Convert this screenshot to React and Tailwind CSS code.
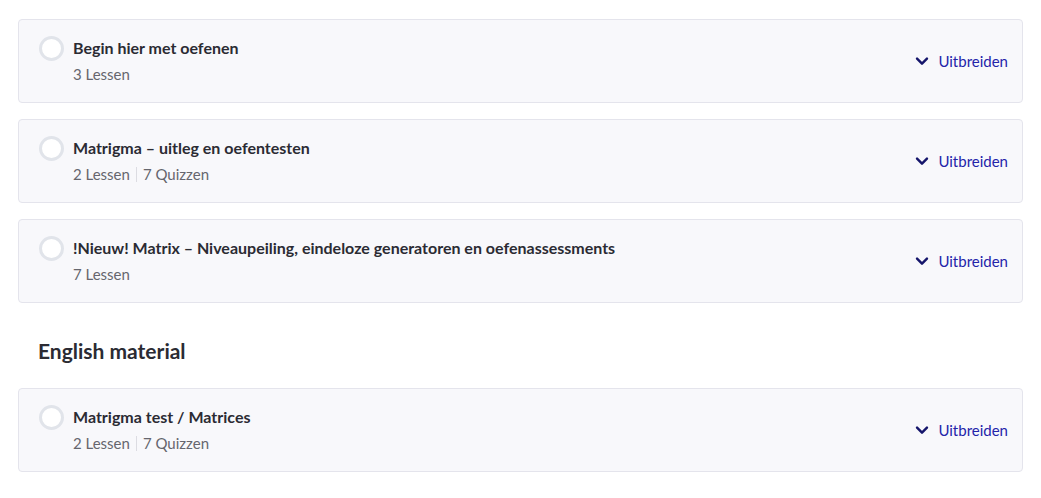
import React from 'react';

const sections = [
  { title: 'Begin hier met oefenen', meta: ['3 Lessen'] },
  { title: 'Matrigma – uitleg en oefentesten', meta: ['2 Lessen', '7 Quizzen'] },
  { title: '!Nieuw! Matrix – Niveaupeiling, eindeloze generatoren en oefenassessments', meta: ['7 Lessen'] },
];

const english = [{ title: 'Matrigma test / Matrices', meta: ['2 Lessen', '7 Quizzen'] }];

const Chevron = () => (
  <svg width="14" height="14" viewBox="0 0 24 24" fill="none" stroke="#15156b" strokeWidth="4.2" strokeLinecap="round" strokeLinejoin="round">
    <path d="M3.5 8l8.5 8.5 8.5-8.5" />
  </svg>
);

const CourseRow = ({ title, meta }) => (
  <div className="flex items-center justify-between rounded border border-[#e4e4ec] bg-[#f8f8fb] pl-5 pr-[14px] py-4">
    <div className="flex items-start gap-[9px]">
      <div className="flex h-6 items-center">
        <span className="block h-[25px] w-[25px] rounded-full border-[3px] border-[#e1e4ea] bg-white" />
      </div>
      <div>
        <p className="text-[16px] leading-6 font-bold text-[#2b2b33]">{title}</p>
        <div className="mt-0.5 flex items-center text-[15px] leading-6 text-[#66666e]">
          {meta.map((m, i) => (
            <React.Fragment key={m}>
              {i > 0 && <span className="mx-[6px] h-[15px] w-px bg-[#dcdce2]" />}
              <span>{m}</span>
            </React.Fragment>
          ))}
        </div>
      </div>
    </div>
    <button className="flex items-center gap-[9px] text-[15px] text-[#2424aa]">
      <Chevron />
      <span>Uitbreiden</span>
    </button>
  </div>
);

export default function App() {
  return (
    <div className="min-h-[498px] bg-white px-[18px] pt-[19px]" style={{ fontFamily: 'Lato, "Noto Sans", sans-serif' }}>
      <div className="flex flex-col gap-4">
        {sections.map((s) => (
          <CourseRow key={s.title} {...s} />
        ))}
      </div>
      <h2 className="pl-5 pt-[34px] pb-[23px] text-[21px] leading-7 font-bold text-[#2b2b33]">English material</h2>
      <div className="flex flex-col gap-4">
        {english.map((s) => (
          <CourseRow key={s.title} {...s} />
        ))}
      </div>
    </div>
  );
}
